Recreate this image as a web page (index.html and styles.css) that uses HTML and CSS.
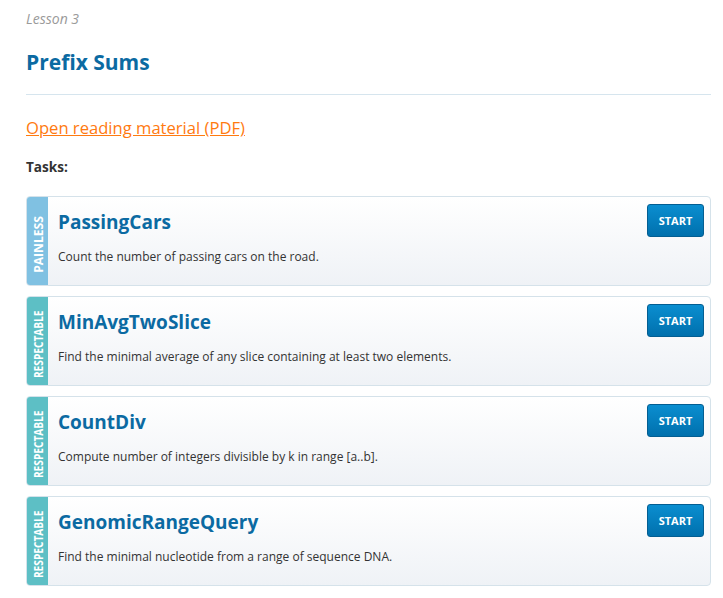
FILE: index.html
```html
<!DOCTYPE html>
<html>
<head>
<meta charset="utf-8">
<link rel="stylesheet" href="styles.css">
</head>
<body>
<div class="page">
  <div class="lesson">Lesson 3</div>
  <h1 class="title">Prefix Sums</h1>
  <div class="divider"></div>
  <a class="reading" href="#">Open reading material (PDF)</a>
  <div class="tasks-label">Tasks:</div>
  <div class="tasks">
    <div class="card">
      <div class="level painless"><span>PAINLESS</span></div>
      <div class="body">
        <div class="name">PassingCars</div>
        <div class="desc">Count the number of passing cars on the road.</div>
      </div>
      <div class="action"><a class="start" href="#">START</a></div>
    </div>
    <div class="card">
      <div class="level respectable"><span>RESPECTABLE</span></div>
      <div class="body">
        <div class="name">MinAvgTwoSlice</div>
        <div class="desc">Find the minimal average of any slice containing at least two elements.</div>
      </div>
      <div class="action"><a class="start" href="#">START</a></div>
    </div>
    <div class="card">
      <div class="level respectable"><span>RESPECTABLE</span></div>
      <div class="body">
        <div class="name">CountDiv</div>
        <div class="desc">Compute number of integers divisible by k in range [a..b].</div>
      </div>
      <div class="action"><a class="start" href="#">START</a></div>
    </div>
    <div class="card">
      <div class="level respectable"><span>RESPECTABLE</span></div>
      <div class="body">
        <div class="name">GenomicRangeQuery</div>
        <div class="desc">Find the minimal nucleotide from a range of sequence DNA.</div>
      </div>
      <div class="action"><a class="start" href="#">START</a></div>
    </div>
  </div>
</div>
</body>
</html>
```
FILE: styles.css
```css
html, body {
  margin: 0;
  padding: 0;
  background: #fff;
}
body {
  font-family: "Open Sans", "DejaVu Sans", sans-serif;
  color: #333;
}
.page {
  padding: 9px 12px 0 26px;
}
.lesson {
  font-size: 14px;
  line-height: 20px;
  font-style: italic;
  color: #9a9a9a;
}
.title {
  margin: 19px 0 0 0;
  font-size: 21px;
  line-height: 28px;
  font-weight: 700;
  color: #0b6aa2;
}
.divider {
  margin-top: 18px;
  height: 1px;
  background: #d6e5ee;
}
.reading {
  display: inline-block;
  margin-top: 22px;
  font-size: 16.6px;
  line-height: 22px;
  color: #ff7a10;
  text-decoration: underline;
}
.tasks-label {
  margin-top: 19px;
  font-size: 13.6px;
  line-height: 18px;
  font-weight: 700;
  color: #333;
}
.tasks {
  margin-top: 20px;
  display: flex;
  flex-direction: column;
  gap: 10px;
}
.card {
  display: flex;
  height: 88px;
  border: 1px solid #d5e2ea;
  border-radius: 4px;
  background: linear-gradient(#ffffff, #eff2f6);
  overflow: hidden;
}
.level {
  width: 21px;
  flex: none;
  padding-top: 6px;
  box-sizing: border-box;
  display: flex;
  align-items: center;
  justify-content: center;
}
.level span {
  writing-mode: vertical-rl;
  color: #fff;
  font-size: 13px;
  line-height: 16px;
  font-weight: 700;
  white-space: nowrap;
}
.painless { background: #80c1e2; }
.painless span { transform: rotate(180deg) scale(1, 0.93); }
.respectable { background: #5dbfc5; }
.respectable span { transform: rotate(180deg) scale(1, 0.78); }
.body {
  flex: 1;
  padding: 12px 0 0 10px;
}
.name {
  font-size: 19px;
  line-height: 26px;
  font-weight: 700;
  color: #0b6aa2;
}
.desc {
  margin-top: 14px;
  font-size: 12px;
  line-height: 16px;
  color: #333;
}
.action {
  padding: 7px 6px 0 0;
}
.start {
  display: flex;
  align-items: center;
  justify-content: center;
  width: 55px;
  height: 31px;
  border: 1px solid #035e92;
  border-radius: 3px;
  background: linear-gradient(#0a8ed0, #0070ad);
  color: #fff;
  font-size: 11px;
  font-weight: 700;
  text-decoration: none;
}
```
